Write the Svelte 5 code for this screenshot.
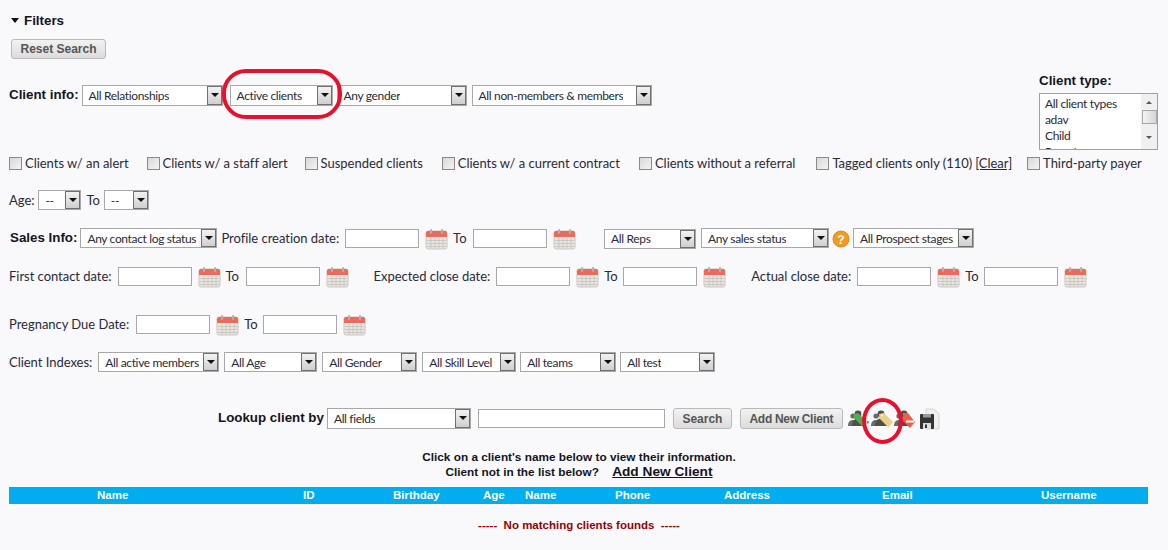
<script>
  const clientSelects = [
    { label: "All Relationships", w: 141 },
    { label: "Active clients", w: 103 },
    { label: "Any gender", w: 130 },
    { label: "All non-members & members", w: 180 }
  ];
  const checks = [
    "Clients w/ an alert",
    "Clients w/ a staff alert",
    "Suspended clients",
    "Clients w/ a current contract",
    "Clients without a referral",
    "Tagged clients only (110)"
  ];
  const indexSelects = [
    { label: "All active members", w: 121 },
    { label: "All Age", w: 93 },
    { label: "All Gender", w: 95 },
    { label: "All Skill Level", w: 94 },
    { label: "All teams", w: 96 },
    { label: "All test", w: 95 }
  ];
  const columns = ["Name", "ID", "Birthday", "Age", "Name", "Phone", "Address", "Email", "Username"];
</script>

{#snippet dropdown(label, w)}
  <span class="select" style="width: {w}px">
    <span class="select-text">{label}</span>
    <span class="arrow"></span>
  </span>
{/snippet}

{#snippet calendar()}
  <svg class="cal" width="23" height="22" viewBox="0 0 23 22">
    <rect x="1" y="3" width="21" height="18" rx="2" fill="#e9e6e1" stroke="#c9c5bf" />
    <path d="M1 9V5a2 2 0 0 1 2-2h17a2 2 0 0 1 2 2v4z" fill="#ec6a5c" />
    <path d="M2 12.5h19M2 15.5h19M2 18.5h19M6 10v10M10 10v10M14 10v10M18 10v10" stroke="#c4c0ba" stroke-width="0.8" fill="none" />
    <rect x="5" y="1" width="2" height="5" rx="1" fill="#b5b0aa" />
    <rect x="16" y="1" width="2" height="5" rx="1" fill="#b5b0aa" />
  </svg>
{/snippet}

{#snippet dateInput()}
  <span class="input date"></span>
{/snippet}

{#snippet people()}
  <circle cx="5" cy="9" r="2.6" fill="#6a6a6a" />
  <path d="M0 19c0-4 2-6 5-6s5 2 5 6z" fill="#6a6a6a" />
  <circle cx="10" cy="7" r="3.4" fill="#4f4f4f" />
  <path d="M4 19c0-5 2.500-7.500 6-7.500s6 2.500 6 7.500z" fill="#4f4f4f" />
{/snippet}

<div class="page">
  <div class="top">
    <div class="top-left">
      <div class="filters-title"><span class="caret"></span>Filters</div>
      <button class="btn reset">Reset Search</button>
      <div class="row client-row">
        <span class="label bold">Client info:</span>
        {#each clientSelects as s}
          {@render dropdown(s.label, s.w)}
        {/each}
      </div>
    </div>
    <div class="client-type">
      <div class="bold">Client type:</div>
      <div class="listbox">
        <div class="options">
          <div>All client types</div>
          <div>adav</div>
          <div>Child</div>
          <div>Parent</div>
        </div>
        <div class="scrollbar">
          <span class="up"></span>
          <span class="thumb"></span>
          <span class="down"></span>
        </div>
      </div>
    </div>
  </div>

  <div class="row checks">
    {#each checks as c}
      <span class="check"><span class="box"></span>{c}</span>
    {/each}
    <span class="clear">[Clear]</span>
    <span class="check third"><span class="box"></span>Third-party payer</span>
  </div>

  <div class="row age short">
    <span>Age:</span>
    {@render dropdown("--", 43)}
    <span class="age-to">To</span>
    {@render dropdown("--", 45)}
  </div>

  <div class="row sales short">
    <span class="bold sales-label">Sales Info:</span>
    {@render dropdown("Any contact log status", 137)}
    <span class="profile">Profile creation date:</span>
    {@render dateInput()}
    {@render calendar()}
    <span class="to">To</span>
    {@render dateInput()}
    {@render calendar()}
    <span class="reps">{@render dropdown("All Reps", 92)}</span>
    {@render dropdown("Any sales status", 128)}
    <svg class="help" width="18" height="18" viewBox="0 0 18 18">
      <circle cx="9" cy="9" r="8" fill="#f39a1e" stroke="#e08a18" />
      <text x="9" y="13.500" text-anchor="middle" class="help-mark">?</text>
    </svg>
    {@render dropdown("All Prospect stages", 121)}
  </div>

  <div class="row dates">
    <span>First contact date:</span>
    {@render dateInput()}
    {@render calendar()}
    <span class="to">To</span>
    {@render dateInput()}
    {@render calendar()}
    <span class="next-group">Expected close date:</span>
    {@render dateInput()}
    {@render calendar()}
    <span class="to wide">To</span>
    {@render dateInput()}
    {@render calendar()}
    <span class="next-group">Actual close date:</span>
    {@render dateInput()}
    {@render calendar()}
    <span class="to wide">To</span>
    {@render dateInput()}
    {@render calendar()}
  </div>

  <div class="row pregnancy">
    <span>Pregnancy Due Date:</span>
    {@render dateInput()}
    {@render calendar()}
    <span class="to wide">To</span>
    {@render dateInput()}
    {@render calendar()}
  </div>

  <div class="row indexes short">
    <span class="index-label">Client Indexes:</span>
    {#each indexSelects as s}
      {@render dropdown(s.label, s.w)}
    {/each}
  </div>

  <div class="row lookup">
    <span class="bold lookup-label">Lookup client by</span>
    {@render dropdown("All fields", 144)}
    <span class="input search-box"></span>
    <button class="btn search">Search</button>
    <button class="btn add">Add New Client</button>
    <span class="icons">
      <svg width="23" height="24" viewBox="0 0 23 24">
        {@render people()}
        <path d="M6 7l4-1 9 9-4 5-9-9z" fill="#4fae4f" />
        <rect x="12" y="14" width="9" height="2.500" rx="1" fill="#4fae4f" />
        <rect x="14" y="14.500" width="5" height="1.500" fill="#fff" />
      </svg>
      <svg width="23" height="24" viewBox="0 0 23 24">
        {@render people()}
        <path d="M8 7l5-1 9 9-4.500 5.500-9-9z" fill="#ecd08a" />
        <circle cx="11" cy="8.500" r="1" fill="#fff" />
      </svg>
      <svg width="25" height="24" viewBox="0 0 25 24">
        {@render people()}
        <path d="M9 6h5l7 9-5 6-7-7z" fill="#e8604c" />
        <rect x="12" y="13.500" width="8" height="2" fill="#fff" />
      </svg>
      <svg width="21" height="22" viewBox="0 0 21 22">
        <path d="M7 1h8l5 5v15H7z" fill="#f0f0f0" stroke="#d4d4d4" />
        <rect x="1" y="6" width="14" height="15" rx="1" fill="#333" />
        <rect x="4" y="6" width="8" height="3.500" fill="#999" />
        <rect x="4" y="15" width="8" height="6" fill="#ddd" />
        <rect x="6" y="16.500" width="2" height="3.500" fill="#333" />
      </svg>
    </span>
  </div>

  <div class="hint">
    <div>Click on a client's name below to view their information.</div>
    <div class="hint-second">Client not in the list below? <span class="add-link">Add New Client</span></div>
  </div>

  <div class="table-head">
    {#each columns as col}
      <span>{col}</span>
    {/each}
  </div>
  <div class="empty">-----&nbsp; No matching clients founds &nbsp;-----</div>

  <span class="ring ring-active"></span>
  <span class="ring ring-tag"></span>
</div>

<style>
  :global(body) {
    background: #f9f9fc;
  }

  .page {
    position: relative;
    width: 1168px;
    height: 550px;
    overflow: hidden;
    font-family: Lato, "Liberation Sans", sans-serif;
    font-size: 13px;
    letter-spacing: -0.03px;
    color: #2a2a3a;
    box-sizing: border-box;
    padding-left: 9px;
  }

  .bold {
    font-family: "Liberation Sans", sans-serif;
    font-weight: bold;
    font-size: 13.33px;
    letter-spacing: 0;
    color: #14141f;
  }

  .row {
    display: flex;
    align-items: center;
    height: 21px;
    white-space: nowrap;
  }

  /* plain labels sit a pixel above the controls beside them */
  .row > span:not(.select, .input, .reps, .icons) {
    margin-bottom: 2px;
  }

  .short .select {
    height: 20px;
    align-self: flex-start;
  }

  .top {
    display: flex;
    justify-content: space-between;
    height: 150px;
  }

  .filters-title {
    display: flex;
    align-items: center;
    margin-top: 12px;
    height: 16px;
    padding-left: 2px;
    font-family: "Liberation Sans", sans-serif;
    font-weight: bold;
    font-size: 13.33px;
    letter-spacing: 0;
    color: #14141f;
  }

  .caret {
    width: 0;
    height: 0;
    border-left: 4px solid transparent;
    border-right: 4px solid transparent;
    border-top: 5px solid #111;
    margin-right: 5px;
  }

  .btn {
    display: block;
    height: 21px;
    padding: 0;
    border: 1px solid #b9b9b9;
    border-radius: 3px;
    background: linear-gradient(#f2f2f2, #dcdcdc);
    color: #555;
    font-family: "Liberation Sans", sans-serif;
    font-weight: bold;
    font-size: 12px;
  }

  .reset {
    margin: 11px 0 0 2px;
    width: 95px;
    height: 20px;
  }

  .client-row {
    margin-top: 26px;
    gap: 5px;
  }

  .client-row .label {
    margin-right: -2px;
  }

  .client-row .select:nth-child(3) {
    margin-left: 2px;
  }

  .client-row .select:nth-child(4) {
    margin-left: -1px;
  }

  .client-type {
    margin: 73px 10px 0 0;
    width: 119px;
  }

  .listbox {
    display: flex;
    margin-top: 5px;
    height: 57px;
    box-sizing: border-box;
    border: 1px solid #a0a0a0;
    background: #fff;
    overflow: hidden;
    font-size: 12px;
    letter-spacing: -0.35px;
  }

  .options {
    flex: 1;
    padding: 2px 0 0 5px;
    line-height: 16px;
  }

  .scrollbar {
    width: 16px;
    background: #f0f0f0;
    display: flex;
    flex-direction: column;
    align-items: center;
  }

  .up,
  .down {
    width: 0;
    height: 0;
    border-left: 3px solid transparent;
    border-right: 3px solid transparent;
  }

  .up {
    border-bottom: 3px solid #555;
    margin-top: 7px;
  }

  .down {
    border-top: 3px solid #555;
    margin-top: 12px;
  }

  .thumb {
    width: 15px;
    height: 14px;
    margin-top: 6px;
    box-sizing: border-box;
    border: 1px solid #a8a8a8;
    background: linear-gradient(to right, #f4f4f4, #d4d4d4);
  }

  .select {
    display: flex;
    align-items: center;
    justify-content: space-between;
    height: 21px;
    box-sizing: border-box;
    border: 1px solid #a8a8a8;
    background: #fff;
    font-size: 12px;
    letter-spacing: -0.35px;
    flex: none;
  }

  .select-text {
    padding-left: 6px;
    overflow: hidden;
  }

  .arrow {
    position: relative;
    flex: none;
    width: 15px;
    align-self: stretch;
    box-sizing: border-box;
    border: 1px solid #707070;
    background: linear-gradient(#f2f2f2, #cfcfcf);
  }

  .arrow::after {
    content: "";
    position: absolute;
    left: 3px;
    top: 6px;
    border-left: 4px solid transparent;
    border-right: 4px solid transparent;
    border-top: 4px solid #111;
  }

  .checks {
    margin-top: 4px;
    height: 18px;
    gap: 19px;
  }

  .checks > span:not(.select, .input, .reps, .icons) {
    margin-bottom: 0;
  }

  .check {
    display: flex;
    align-items: center;
  }

  .check:nth-child(1) {
    margin-right: -1px;
  }

  .check:nth-child(2) {
    margin-right: -2px;
  }

  .check:nth-child(5) {
    margin-right: 2px;
  }

  .box {
    width: 13px;
    height: 13px;
    box-sizing: border-box;
    border: 1px solid #8a8a8a;
    background: linear-gradient(135deg, #d8d8d8, #f4f4f4);
    margin-right: 3px;
  }

  .clear {
    margin-left: -16px;
    text-decoration: underline;
  }

  .third {
    margin-left: -4px;
  }

  .age {
    margin-top: 18px;
    gap: 4px;
  }

  .age-to {
    margin-left: 1px;
  }

  .sales {
    margin-top: 17px;
  }

  .sales-label {
    margin: 0 3px 0 1px;
  }

  .profile {
    margin: 0 6px 0 4px;
  }

  .input {
    display: block;
    height: 19px;
    box-sizing: border-box;
    border: 1px solid #a8a8a8;
    background: #fff;
    flex: none;
  }

  .date {
    width: 74px;
  }

  .cal {
    margin: 0 5px 0 6px;
    flex: none;
  }

  .to {
    margin-right: 5px;
    width: 15px;
  }

  .to.wide {
    margin-right: 4px;
    width: 15px;
  }

  .reps {
    margin: 0 5px 0 23px;
  }

  .help {
    margin: 0 3px 0 3px;
  }

  .help-mark {
    fill: #fff;
    font-family: "Liberation Sans", sans-serif;
    font-weight: bold;
    font-size: 12px;
  }

  .dates {
    margin-top: 17px;
  }

  .dates span:first-child,
  .next-group {
    margin-right: 6px;
  }

  .next-group {
    margin-left: 20px;
  }

  .pregnancy {
    margin-top: 27px;
    gap: 0;
  }

  .pregnancy span:first-child {
    margin-right: 7px;
  }

  .indexes {
    margin-top: 17px;
    gap: 5px;
  }

  .indexes .select:nth-child(6),
  .indexes .select:nth-child(7) {
    margin-left: -1px;
  }

  .index-label {
    margin-right: 1px;
  }

  .lookup {
    margin-top: 35px;
    padding-left: 209px;
  }

  .lookup-label {
    margin-right: 3px;
  }

  .search-box {
    width: 187px;
    margin-left: 7px;
  }

  .search {
    width: 59px;
    margin-left: 8px;
  }

  .add {
    width: 103px;
    margin-left: 8px;
    letter-spacing: -0.3px;
  }

  .icons {
    display: flex;
    align-items: center;
    margin-left: 5px;
    gap: 0;
  }

  .hint {
    margin: 21px 19px 0 0;
    text-align: center;
    font-family: "Liberation Sans", sans-serif;
    font-weight: bold;
    font-size: 11.8px;
    line-height: 14px;
    letter-spacing: 0;
    color: #14141f;
  }

  .hint-second {
    margin-top: 1px;
  }

  .add-link {
    margin-left: 10px;
    font-size: 13.7px;
    text-decoration: underline;
  }

  .table-head {
    display: grid;
    grid-template-columns: 206px 90px 90px 42px 90px 109px 158px 159px 1fr;
    margin-top: 8px;
    width: 1139px;
    height: 17px;
    box-sizing: border-box;
    padding: 0 0 1px 88px;
    align-items: center;
    background: #00aeef;
    color: #fff;
    font-family: "Liberation Sans", sans-serif;
    font-weight: bold;
    font-size: 11.5px;
    letter-spacing: 0;
  }

  .empty {
    margin: 14px 19px 0 0;
    text-align: center;
    line-height: 14px;
    font-family: "Liberation Sans", sans-serif;
    font-weight: bold;
    font-size: 11.5px;
    letter-spacing: 0;
    color: #990000;
  }

  .ring {
    position: absolute;
    box-sizing: border-box;
    border: 4px solid #e8112d;
  }

  .ring-active {
    left: 222px;
    top: 69px;
    width: 120px;
    height: 50px;
    border-radius: 24px;
  }

  .ring-tag {
    left: 862px;
    top: 398px;
    width: 41px;
    height: 46px;
    border-radius: 50%;
  }
</style>
